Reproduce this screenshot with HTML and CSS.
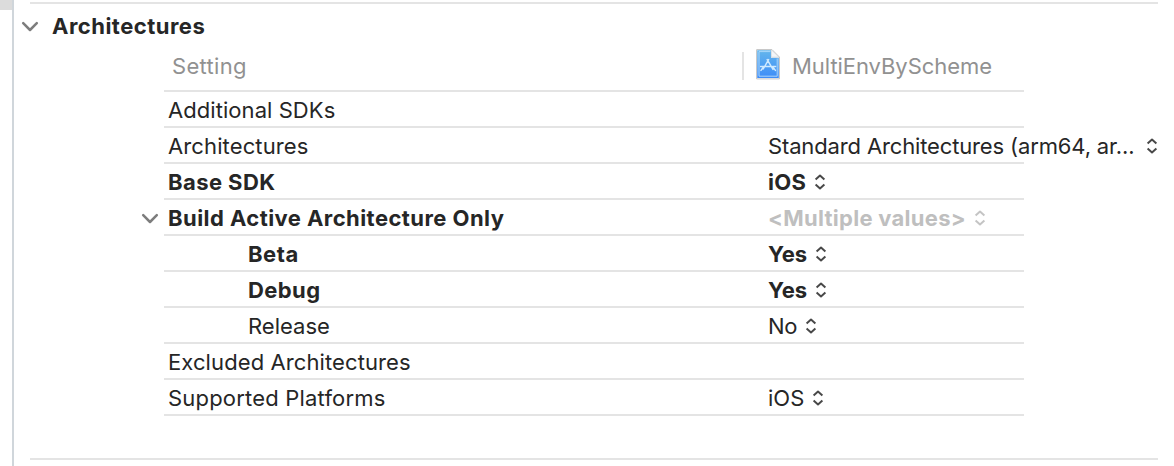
FILE: index.html
```
<!DOCTYPE html>
<html lang="en">
<head>
<meta charset="utf-8">
<title>Build Settings</title>
<link rel="stylesheet" href="styles.css">
</head>
<body>
<svg class="defs" width="0" height="0">
  <symbol id="updown" viewBox="0 0 12 18"><path d="M1.6 6.4 6 2.6 10.4 6.4M1.6 11.6 6 15.4 10.4 11.6"/></symbol>
  <symbol id="chevron" viewBox="0 0 18 12"><path d="M2.2 2.2 9 9 15.8 2.2"/></symbol>
</svg>
<div class="window">
  <aside class="sidebar"><div class="sidebar-item"></div></aside>
  <main class="editor">
    <section class="group">
      <h2 class="group-title"><svg class="chevron"><use href="#chevron"/></svg><span class="t-group">Architectures</span></h2>
      <div class="table">
        <div class="row head">
          <div class="name"><span class="t-setting">Setting</span></div>
          <div class="target">
            <svg class="file" viewBox="0 0 26 32">
              <defs><linearGradient id="paper" x1="0" y1="0" x2="0" y2="1"><stop offset="0" stop-color="#64b6ec"/><stop offset="1" stop-color="#3d8cf8"/></linearGradient></defs>
              <path d="M1.6 1.6H17L24.4 9V30.9H1.6Z" fill="#fff" stroke="#c3c3c3" stroke-width="1"/>
              <path d="M2.2 2.2H16V9.8H23.8V30H2.2Z" fill="url(#paper)"/>
              <path d="M15.5 3.6H4V28.2H22.2V10.5" fill="none" stroke="#b4dbfb" stroke-width=".9"/>
              <path d="M16.4 1.8V9.2H24Z" fill="#f4f6f8" stroke="#c6ccd2" stroke-width=".6"/>
              <path d="M13.6 11.6 8.2 21M12.2 11.6 18 21.4M5.6 18.6H15.4M17.6 18.6H20.6M6 22.4 8 19.6M20.4 22.4 18.4 19.6" fill="none" stroke="#cfeaff" stroke-width="1.5" stroke-linecap="round"/>
            </svg>
            <span class="t-target">MultiEnvByScheme</span>
          </div>
        </div>
        <div class="row"><div class="name"><span class="t-addl">Additional SDKs</span></div></div>
        <div class="row"><div class="name"><span class="t-arch">Architectures</span></div><div class="value wide"><span class="t-std">Standard Architectures (arm64, ar...</span><svg class="updown"><use href="#updown"/></svg></div></div>
        <div class="row bold"><div class="name"><span class="t-base">Base SDK</span></div><div class="value"><span class="t-iosb">iOS</span><svg class="updown"><use href="#updown"/></svg></div></div>
        <div class="row bold"><svg class="chevron"><use href="#chevron"/></svg><div class="name"><span class="t-build">Build Active Architecture Only</span></div><div class="value mixed"><span class="t-multi">&lt;Multiple values&gt;</span><svg class="updown"><use href="#updown"/></svg></div></div>
        <div class="row bold child"><div class="name"><span class="t-beta">Beta</span></div><div class="value"><span class="t-yes">Yes</span><svg class="updown"><use href="#updown"/></svg></div></div>
        <div class="row bold child"><div class="name"><span class="t-debug">Debug</span></div><div class="value"><span class="t-yes">Yes</span><svg class="updown"><use href="#updown"/></svg></div></div>
        <div class="row child"><div class="name"><span class="t-release">Release</span></div><div class="value"><span class="t-no">No</span><svg class="updown"><use href="#updown"/></svg></div></div>
        <div class="row"><div class="name"><span class="t-excl">Excluded Architectures</span></div></div>
        <div class="row"><div class="name"><span class="t-supp">Supported Platforms</span></div><div class="value"><span class="t-ios">iOS</span><svg class="updown"><use href="#updown"/></svg></div></div>
      </div>
    </section>
  </main>
</div>
</body>
</html>
```
FILE: styles.css
```
* { box-sizing: border-box; }
body { margin: 0; background: #fff; color: #262626; font: 22px/34px Inter, "Liberation Sans", sans-serif; }
.defs { display: block; }
.window { display: flex; height: 466px; overflow: hidden; }
.sidebar { width: 14px; border-right: 2px solid #d0d6db; }
.sidebar-item { height: 10px; background: #dcdcdc; }
.editor { flex: 1; padding: 2px 16px 0; }
.group { height: 458px; border: solid #e4e4e4; border-width: 2px 0; }
.group-title { display: flex; align-items: center; height: 38px; margin: 0 0 0 -9px; padding-top: 6px; font-size: 22px; font-weight: 700; line-height: 34px; }
.group-title .chevron { margin-right: 13px; }
.chevron { flex: none; width: 18px; height: 12px; margin-top: 2px; fill: none; stroke: #7d7d7d; stroke-width: 2.5; stroke-linecap: round; stroke-linejoin: round; }
.table { width: 860px; margin-left: 134px; }
.row { display: flex; align-items: center; height: 36px; border-bottom: 2px solid #e4e4e4; white-space: nowrap; }
.row > .chevron { margin-top: 3px; margin-left: -23px; margin-right: 5px; }
.name { flex: none; width: 604px; padding: 2px 0 0 4px; }
.child .name { padding-left: 84px; }
.bold { font-weight: 700; }
.head { height: 50px; color: #919191; }
.head .name { width: 578px; padding: 0 0 0 8px; }
.target { display: flex; align-items: center; height: 28px; border-left: 2px solid #e4e4e4; padding-left: 11px; }
.file { width: 26px; height: 32px; margin: -4px 11px 0 0; }
.value { display: flex; flex: none; align-items: center; padding-top: 2px; }
.updown { width: 12px; height: 18px; margin-left: 8px; fill: none; stroke: #484848; stroke-width: 2; stroke-linejoin: round; }
.wide .updown { margin-left: 12px; }
.mixed { color: #bfbfbf; }
.mixed .updown { stroke: #c4c4c4; }

/* Tracking per label */
.t-group { letter-spacing: .48px; }
.t-setting { letter-spacing: .3px; }
.t-target { letter-spacing: -.05px; }
.t-addl { letter-spacing: .06px; }
.t-arch { letter-spacing: .12px; }
.t-std { letter-spacing: -.14px; }
.t-base { letter-spacing: .42px; }
.t-iosb { letter-spacing: .3px; }
.t-build { letter-spacing: .44px; }
.t-multi { letter-spacing: .27px; }
.t-beta { letter-spacing: .55px; }
.t-debug { letter-spacing: .4px; }
.t-no { letter-spacing: -.4px; }
.t-excl { letter-spacing: .1px; }
.t-supp { letter-spacing: .19px; }
```
